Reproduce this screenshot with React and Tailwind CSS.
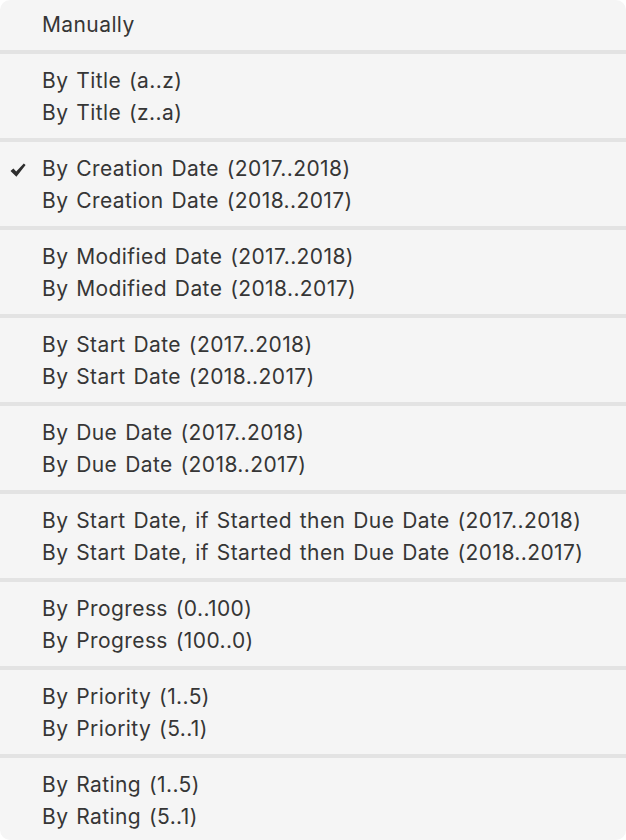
import React from "react";

const groups = [
  ["Manually"],
  ["By Title (a..z)", "By Title (z..a)"],
  ["By Creation Date (2017..2018)", "By Creation Date (2018..2017)"],
  ["By Modified Date (2017..2018)", "By Modified Date (2018..2017)"],
  ["By Start Date (2017..2018)", "By Start Date (2018..2017)"],
  ["By Due Date (2017..2018)", "By Due Date (2018..2017)"],
  [
    "By Start Date, if Started then Due Date (2017..2018)",
    "By Start Date, if Started then Due Date (2018..2017)",
  ],
  ["By Progress (0..100)", "By Progress (100..0)"],
  ["By Priority (1..5)", "By Priority (5..1)"],
  ["By Rating (1..5)", "By Rating (5..1)"],
];

const checked = "By Creation Date (2017..2018)";

const Check = () => (
  <svg width="16" height="15" viewBox="0 0 16 15" className="mt-[2px]">
    <path
      d="M0.5 8 L3.4 5.4 L6.2 8.4 L13.8 0.6 L15.6 2.1 L6.4 13.8 Z"
      fill="#2e2e2e"
    />
  </svg>
);

export default function App() {
  return (
    <div className="w-[626px] h-[840px] bg-white overflow-hidden">
      <div
        className="h-full bg-[#f5f5f5] rounded-[10px] text-[#363636] text-[21px] tracking-[0.4px] [word-spacing:1.6px]"
        style={{ fontFamily: "Inter, 'Noto Sans', sans-serif" }}
      >
        {groups.map((items, gi) => (
          <div key={gi}>
            {/* Separator */}
            {gi > 0 && <div className="h-[4px] bg-[#e3e3e3]" />}
            <div className={gi === 0 ? "pt-2 pb-2.5" : "py-2.5"}>
              {items.map((label) => (
                <div key={label} className="h-8 flex items-center pt-[2px]">
                  <span className="w-[42px] flex pl-[10px]">
                    {label === checked && <Check />}
                  </span>
                  <span className="whitespace-nowrap">{label}</span>
                </div>
              ))}
            </div>
          </div>
        ))}
      </div>
    </div>
  );
}
